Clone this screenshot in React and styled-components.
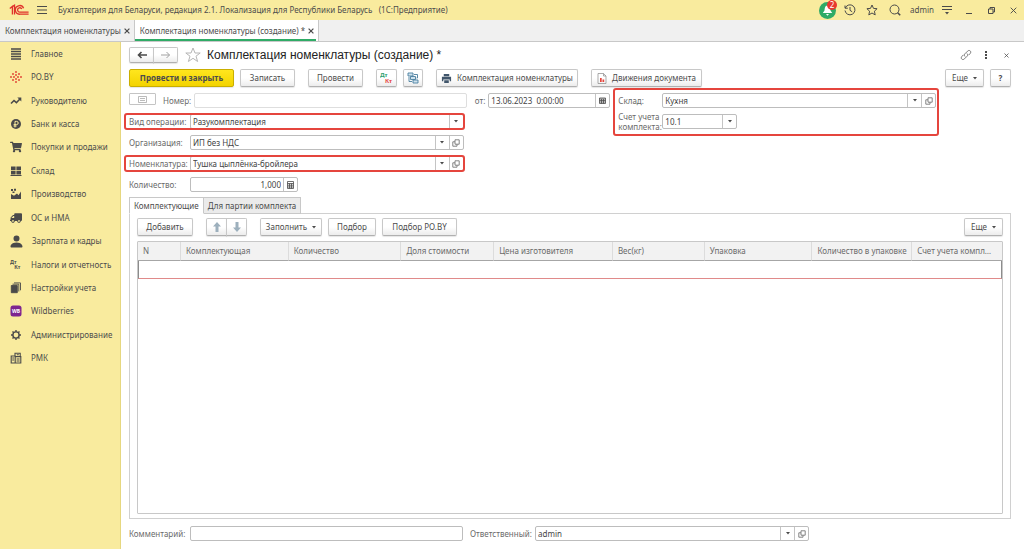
import styled, { createGlobalStyle, css } from "styled-components";
import { FaShoppingCart, FaTruck } from "react-icons/fa";
import { BsPersonFill } from "react-icons/bs";

const GlobalStyle = createGlobalStyle`
    * {
        box-sizing: border-box;
    }

    body {
        margin: 0;
        background: #fff;
    }

    body, button, input, select {
        font-family: "Noto Sans", "Liberation Sans", sans-serif;
        font-size: 8px;
        line-height: 10px;
        color: #4c4c4c;
    }

    svg {
        display: block;
        flex: none;
    }
`

const Page = styled.div`
    display: flex;
    flex-direction: column;
    min-height: 100vh;
`

const TitleBar = styled.header`
    display: flex;
    align-items: center;
    height: 20px;
    padding-left: 9px;
    background: #f9eb9e;

    .title {
        flex: 1;
        margin-left: 3px;
        white-space: pre;
    }
`

const BarButton = styled.button`
    display: flex;
    align-items: center;
    justify-content: center;
    width: ${({ $width }) => $width || 22}px;
    height: 20px;
    padding: 0;
    border: none;
    background: none;
    cursor: pointer;
`

const Bell = styled(BarButton)`
    position: relative;

    span {
        position: absolute;
        top: 0;
        right: 1px;
        width: 10px;
        height: 10px;
        border-radius: 5px;
        background: #e8382f;
        color: #fff;
        text-align: center;
    }
`

const User = styled.span`
    margin: 0 2px 0 4px;
`

const WindowTabs = styled.nav`
    display: flex;
    height: 22px;
    background: #f0f0f0;
    border-bottom: 1px solid #c8c8c8;
`

const WindowTab = styled.div`
    display: flex;
    align-items: center;
    gap: 3px;
    padding: 0 4px 0 5px;
    border-right: 1px solid #c8c8c8;
    ${({ $active }) => $active && css`
        background: linear-gradient(#2fab66, #2fab66) 0 100% / calc(100% - 2px) 2px no-repeat #fff;
    `}

    a {
        color: #4c4c4c;
        text-decoration: none;
        white-space: nowrap;
    }

    button {
        padding: 0;
        border: none;
        background: none;
    }
`

const Body = styled.div`
    display: flex;
    flex: 1;
`

const Sidebar = styled.aside`
    flex: none;
    width: 121px;
    background: #f9eb9e;
    border-right: 1px solid #e6d77f;

    ul {
        display: grid;
        grid-auto-rows: 1fr;
        height: 328px;
        margin: 0;
        padding: 0;
        list-style: none;
    }
`

const MenuItem = styled.li`
    display: flex;
    align-items: center;

    a {
        display: flex;
        align-items: center;
        gap: 9px;
        padding-left: 10px;
        color: #4c4c4c;
        text-decoration: none;
        white-space: nowrap;
    }
`

const MirroredTruck = styled(FaTruck)`
    transform: scaleX(-1);
`

const Main = styled.main`
    display: flex;
    flex-direction: column;
    flex: 1;
    min-width: 0;
    padding: 5px 13px 8px 8px;
`

const Heading = styled.div`
    display: flex;
    align-items: center;
    height: 16px;
    margin: 0 -6px 6px 0;

    h1 {
        flex: 1;
        margin: 0 0 0 6px;
        font-family: "Liberation Sans", Arial, sans-serif;
        font-size: 12px;
        font-weight: 400;
        color: #222;
        white-space: nowrap;
    }

    .star {
        margin-left: 7px;
    }
`

const ButtonPair = styled.div`
    display: flex;

    button:first-child {
        border-radius: 2px 0 0 2px;
    }

    button:last-child {
        margin-left: -1px;
        border-radius: 0 2px 2px 0;
    }
`

const Button = styled.button`
    display: flex;
    align-items: center;
    justify-content: center;
    gap: 5px;
    width: ${({ $width }) => $width}px;
    height: ${({ $height }) => $height || 18}px;
    padding: 0;
    border: 1px solid #c8c8c8;
    border-bottom-color: #b0b0b0;
    border-radius: 2px;
    background: linear-gradient(#fff 50%, #ececec);
    box-shadow: 0 1px 1px rgba(0, 0, 0, 0.1);
    white-space: nowrap;
    cursor: pointer;
    ${({ $primary }) => $primary && css`
        border-color: #c9ae00;
        background: linear-gradient(#ffe61e, #f3d300);
        font-weight: 700;
    `}
`

const CommandBar = styled.div`
    display: flex;
    gap: 6px;

    .gap {
        margin-left: 7px;
    }

    .right {
        margin-left: auto;
    }
`

const Form = styled.div`
    display: grid;
    grid-template-columns: minmax(0, 483fr) minmax(0, 327fr) 69fr;
    gap: 3px;
    margin-top: 6px;
`

const Fields = styled.div`
    display: flex;
    flex-direction: column;
    gap: 6px;
`

const Row = styled.div`
    display: flex;
    align-items: center;
    width: ${({ $wide }) => ($wide ? "100%" : "69.5%")};
    height: 15px;
    ${({ $marked }) => $marked && css`
        position: relative;

        &::after {
            content: "";
            position: absolute;
            inset: -1px -1px -1px -5px;
            border: 2px solid #e5453d;
            border-radius: 3px;
            pointer-events: none;
        }
    `}
`

const Label = styled.label`
    flex: none;
    width: ${({ $width }) => $width}px;
    padding-right: 3px;
    color: #6a6a6a;
    text-align: ${({ $end }) => ($end ? "right" : "left")};
    white-space: nowrap;
`

const NumberMode = styled.button`
    display: flex;
    align-items: center;
    justify-content: center;
    width: 27px;
    height: 12px;
    margin: 0 7px 3px 0;
    padding: 0;
    border: 1px solid #c4c4c4;
    border-radius: 1px;
    background: #fff;
`

const Control = styled.div`
    position: relative;
    display: flex;
    flex: ${({ $width }) => ($width ? "none" : "1")};
    width: ${({ $width }) => ($width ? `${$width}px` : "auto")};
    min-width: 0;
    height: 15px;
    border: 1px solid ${({ $pale }) => ($pale ? "#dedede" : "#bdbdbd")};
    border-radius: 2px;
    background: #fff;

    input, select {
        flex: 1;
        width: 100%;
        min-width: 0;
        padding: 0 2px;
        border: none;
        outline: none;
        appearance: none;
        background: none;
        color: #444;
    }

    .number {
        text-align: right;
    }

    button {
        display: flex;
        align-items: center;
        justify-content: center;
        flex: none;
        width: 14px;
        padding: 0;
        border: none;
        border-left: 1px solid #c4c4c4;
        background: none;
    }
`

const ArrowCell = styled.span`
    position: absolute;
    top: 0;
    right: ${({ $offset }) => $offset}px;
    bottom: 0;
    display: flex;
    align-items: center;
    justify-content: center;
    width: 14px;
    border-left: 1px solid #c4c4c4;
    pointer-events: none;
`

const Accounts = styled.div`
    display: flex;
    flex-direction: column;
    align-self: start;
    gap: 6px;
    margin-top: -5px;
    padding: 3px 1px 5px 3px;
    border: 2px solid #e5453d;
    border-radius: 3px;
`

const AccountRow = styled.div`
    display: flex;
    align-items: center;
    height: 15px;
`

const PageTabs = styled.div`
    display: flex;
    margin-top: 5px;
`

const PageTab = styled.button`
    z-index: ${({ $active }) => ($active ? 1 : 0)};
    height: 17px;
    margin: 0 -1px -1px 0;
    padding: 0 4px;
    border: 1px solid #c8c8c8;
    border-bottom-color: ${({ $active }) => ($active ? "#fff" : "#c8c8c8")};
    background: ${({ $active }) => ($active ? "#fff" : "#ebebeb")};
`

const Panel = styled.section`
    display: flex;
    flex-direction: column;
    flex: 1;
    padding: 4px 7px;
    border: 1px solid #d0d0d0;
`

const TableBox = styled.div`
    flex: 1;
    margin-top: 5px;
    border: 1px solid #c8c8c8;
    border-radius: 1px;
`

const Table = styled.table`
    width: 100%;
    table-layout: fixed;
    border-collapse: separate;
    border-spacing: 0;

    th {
        height: 19px;
        padding: 0 4px 0 5px;
        border-right: 1px solid #dcdcdc;
        border-bottom: 1px solid #a6a6a6;
        background: #f2f2f2;
        color: #6a6a6a;
        font-weight: 400;
        text-align: left;
        white-space: nowrap;
    }

    th:last-child {
        border-right: none;
    }

    td {
        height: 18px;
        padding: 0;
        border: 1px solid #8c8c8c;
        border-top: none;
        border-bottom-color: #e08a8a;
    }
`

const Footer = styled.footer`
    display: grid;
    grid-template-columns: minmax(0, 334fr) minmax(0, 339fr) 195fr;
    gap: 7px;
    margin-top: 7px;

    > div {
        display: flex;
        align-items: center;
    }
`

const ink = "#4a4a4a"

function Icon({ w = 12, h = w, box = "0 0 12 12", children, ...rest }) {
    return (
        <svg width={w} height={h} viewBox={box} fill="none" stroke={ink} aria-hidden="true" {...rest}>
            {children}
        </svg>
    )
}

const Caret = () => (
    <Icon w={4} h={3} box="0 0 4 3"><path d="M0 0h4L2 2.5z" fill={ink} stroke="none" /></Icon>
)

const OpenIcon = () => (
    <Icon w={8} box="0 0 8 8" stroke="#777" strokeWidth="0.9"><path d="M3 .8h4.2v4.4H3zM3 2.8H.8v4.4H5v-2" /></Icon>
)

const Cross = ({ size = 6, weight = 1.2 }) => (
    <Icon w={size} box="0 0 6 6" strokeWidth={weight}><path d="M.6.6l4.8 4.8M5.4.6L.6 5.4" /></Icon>
)

const DtKt = ({ w = 14, first = ink, second = ink }) => (
    <Icon w={w} h={12} box="0 0 14 12" stroke="none" fontWeight="700" fontSize="6">
        <text x="0" y="5" fill={first}>Дт</text>
        <text x="5" y="11" fill={second}>Кт</text>
    </Icon>
)

const sections = [
    ["Главное", <Icon strokeWidth="1.3"><path d="M1 1h10M1 3.5h10M1 6h10M1 8.5h10M1 11h10" /></Icon>],
    ["РО.BY", (
        <Icon stroke="#e03a2f" strokeWidth="1.8" strokeLinecap="round">
            <path d="M6 1v0M3 3v0M9 3v0M6 4v0M1 6v0M4 6v0M8 6v0M11 6v0M6 8v0M3 9v0M9 9v0M6 11v0" />
        </Icon>
    )],
    ["Руководителю", <Icon strokeWidth="1.6"><path d="M1 8.5L4 5.5l2.4 2.2 4-4.2" /><path d="M7.3 2.6h4v4z" fill={ink} stroke="none" /></Icon>],
    ["Банк и касса", (
        <Icon>
            <circle cx="6" cy="6" r="5" fill={ink} stroke="none" />
            <path d="M5 9.4V3.4h1.6a1.6 1.6 0 010 3.2H3.6M3.6 8h3" stroke="#f9eb9e" />
        </Icon>
    )],
    ["Покупки и продажи", <FaShoppingCart size={12} color={ink} />],
    ["Склад", <Icon fill={ink} stroke="none"><path d="M1 1.5h4.6v3.8H1zM6.4 1.5H11v3.8H6.4zM1 6h4.6v3.4H1zM6.4 6H11v3.4H6.4zM.5 10h11v1H.5z" /></Icon>],
    ["Производство", <Icon fill={ink} stroke="none"><path d="M1 11V6l3 1.8L7 5.5l1.5 1.7L11 3.5V11zM1 1h2v2H1zM4 .8h2v2H4zM2.5 3.4h2v1.6h-2z" /></Icon>],
    ["ОС и НМА", <MirroredTruck size={12} color={ink} />],
    ["Зарплата и кадры", <BsPersonFill size={13} color={ink} viewBox="1.500 1.500 13 13" />],
    ["Налоги и отчетность", <DtKt w={12} />],
    ["Настройки учета", (
        <Icon strokeWidth="0.9"><path d="M1.3 3.5h6v7.2h-6z" fill={ink} /><path d="M2.5 2.2h6.3v7.3M4 .9h6.5v7.4" /></Icon>
    )],
    ["Wildberries", (
        <Icon stroke="none">
            <rect x=".5" y=".5" width="11" height="11" rx="2.5" fill="#7d2590" />
            <text x="6" y="8" fill="#fff" fontSize="5" fontWeight="700" textAnchor="middle">WB</text>
        </Icon>
    )],
    ["Администрирование", (
        <Icon strokeWidth="1.4">
            <circle cx="6" cy="6" r="3.1" />
            <path d="M6 1v2M6 9v2M1 6h2M9 6h2M2.5 2.5l1.3 1.3M8.2 8.2l1.3 1.3M9.5 2.5L8.2 3.8M3.8 8.2L2.5 9.5" />
        </Icon>
    )],
    ["РМК", (
        <Icon strokeWidth="1.1">
            <path d="M1.2 4h4v7h-4zM5.2 4.6h5.6V11H5.2M5 4V1.2h5.2v3.4M6.8 2.8h2" />
            <path d="M2.2 6h2M2.2 8h2M6.6 7h3M6.6 9h3" />
        </Icon>
    )],
]

const columns = [
    ["N", 43],
    ["Комплектующая", 108],
    ["Количество", 113],
    ["Доля стоимости", 93],
    ["Цена изготовителя", 119],
    ["Вес(кг)", 92],
    ["Упаковка", 108],
    ["Количество в упаковке", 100],
    ["Счет учета компл…", 90],
]

function SelectField({ id, value, open, width }) {
    return (
        <Control $width={width}>
            <select id={id} defaultValue={value}>
                <option>{value}</option>
            </select>
            <ArrowCell $offset={open ? 14 : 0}><Caret /></ArrowCell>
            {open && <button type="button" aria-label="Открыть"><OpenIcon /></button>}
        </Control>
    )
}

function TopBar() {
    return (
        <TitleBar>
            <Icon w={20} h={12} box="0 0 20 12" stroke="#e0322b" strokeWidth="1.3">
                <path d="M.8 4.4L3.4 2.4v8M5.5 10.4V1.2L3.4 2.6" />
                <path d="M14.6 4.3A4.3 4.3 0 1011 10.2h8.6M12.8 5.1a2.2 2.2 0 10-1.8 3.1h8.6" />
            </Icon>
            <BarButton $width={26} aria-label="Меню">
                <Icon w={10} h={8} box="0 0 10 8"><path d="M0 .5h10M0 4h10M0 7.5h10" /></Icon>
            </BarButton>
            <span className="title">
                {"Бухгалтерия для Беларуси, редакция 2.1. Локализация для Республики Беларусь   (1С:Предприятие)"}
            </span>
            <Bell aria-label="Уведомления">
                <Icon w={17} box="0 0 17 17" stroke="none">
                    <circle cx="8.5" cy="8.5" r="8.5" fill="#2fab66" />
                    <path d="M8.5 3.5c2.6 0 2.7 3 3 5l1.7 2.6H3.8l1.7-2.6c.3-2 .4-5 3-5zM7 12h3l-1.5 1.8z" fill="#fff" />
                </Icon>
                <span>2</span>
            </Bell>
            <BarButton $width={23} aria-label="История">
                <Icon><path d="M1.3 4A5 5 0 111 6.5M1 1.5v2.7h2.8M6 3v3.3l2.2 1.5" /></Icon>
            </BarButton>
            <BarButton aria-label="Избранное">
                <Icon><path d="M6 1l1.5 3.4 3.6.3-2.7 2.5.8 3.7L6 9l-3.2 1.9.8-3.7L.9 4.7l3.6-.3z" /></Icon>
            </BarButton>
            <BarButton $width={23} aria-label="Поиск">
                <Icon><circle cx="5.5" cy="5.5" r="4.5" /><path d="M8.7 8.7l2.5 2.5" strokeWidth="1.6" /></Icon>
            </BarButton>
            <User>admin</User>
            <BarButton aria-label="Настройки">
                <Icon w={10} box="0 0 10 10"><path d="M0 1.5h10M0 4.5h10" /><path d="M3 7h4L5 9.5z" fill={ink} stroke="none" /></Icon>
            </BarButton>
            <BarButton aria-label="Свернуть">
                <Icon w={6} h={8} box="0 0 6 8"><path d="M0 7.5h6" /></Icon>
            </BarButton>
            <BarButton aria-label="Восстановить">
                <Icon w={7} box="0 0 7 7"><path d="M.5 2H5v4.5H.5zM2 2V.5h4.5V5H5" /></Icon>
            </BarButton>
            <BarButton aria-label="Закрыть"><Cross size={7} weight={0.8} /></BarButton>
        </TitleBar>
    )
}

function Commands() {
    return (
        <CommandBar>
            <Button $primary $width={105}>Провести и закрыть</Button>
            <Button $width={55}>Записать</Button>
            <Button className="gap" $width={55}>Провести</Button>
            <Button className="gap" $width={21} aria-label="Дт Кт"><DtKt first="#2fa070" second="#e5453d" /></Button>
            <Button $width={20} aria-label="Структура подчиненности">
                <Icon stroke="#4b7f9f" strokeWidth="0.9">
                    <path d="M1 1h5v3H1zM3.5 4.5h5v3h-5zM6 8h5v3H6z" fill="#cfe2ee" />
                    <path d="M7 2.5h3.5V6h-1M2 5v4.5h3" />
                </Icon>
            </Button>
            <Button className="gap" $width={142}>
                <Icon w={11} stroke="none" fill="#41566b">
                    <path d="M3 1h6v2.5H3zM1 4.2h10V9H9.5V7h-7v2H1zM3.5 8h5v3h-5z" />
                </Icon>
                Комплектация номенклатуры
            </Button>
            <Button className="gap" $width={111}>
                <Icon w={10} h={11} box="0 0 10 11" strokeWidth="0.7" stroke="#888">
                    <path d="M1 .5h5.5L9 3v7.500H1zM6.5.5V3H9" />
                    <path d="M3 5v4h1.7V5zM5.5 6.5h1.7V9H5.5z" fill="#e5453d" stroke="none" />
                </Icon>
                Движения документа
            </Button>
            <Button className="right" $width={39}>Еще <Caret /></Button>
            <Button $width={21}><b>?</b></Button>
        </CommandBar>
    )
}

function DocumentForm() {
    return (
        <Form>
            <Fields>
                <Row $wide>
                    <NumberMode aria-label="Номер вручную">
                        <Icon w={9} h={7} box="0 0 9 7" stroke="#aaa" strokeWidth="0.8"><path d="M.5.5h8v6h-8zM2 2.5h5M2 4.5h5" /></Icon>
                    </NumberMode>
                    <Label htmlFor="number" $width={31}>Номер:</Label>
                    <Control $pale><input id="number" /></Control>
                    <Label htmlFor="date" $width={21} $end>от:</Label>
                    <Control $width={122}>
                        <input id="date" defaultValue="13.06.2023  0:00:00" />
                        <button type="button" aria-label="Календарь">
                            <Icon w={7} box="0 0 7 7" strokeWidth="0.8"><path d="M.5 1h6v5.5h-6zM.5 2h6M.5 3.5h6M.5 5h6M2.5 2v4.5M4.5 2v4.5" /></Icon>
                        </button>
                    </Control>
                </Row>
                <Row $marked>
                    <Label htmlFor="kind" $width={61}>Вид операции:</Label>
                    <SelectField id="kind" value="Разукомплектация" />
                </Row>
                <Row>
                    <Label htmlFor="org" $width={61}>Организация:</Label>
                    <SelectField id="org" value="ИП без НДС" open />
                </Row>
                <Row $marked>
                    <Label htmlFor="item" $width={61}>Номенклатура:</Label>
                    <SelectField id="item" value="Тушка цыплёнка-бройлера" open />
                </Row>
                <Row>
                    <Label htmlFor="qty" $width={61}>Количество:</Label>
                    <Control $width={108}>
                        <input id="qty" className="number" defaultValue="1,000" />
                        <button type="button" aria-label="Калькулятор">
                            <Icon w={7} h={8} box="0 0 7 8" strokeWidth="0.8"><path d="M.5.5h6v7h-6zM.5 2.5h6M.5 4.2h6M.5 6h6M2.5 2.5v5M4.5 2.5v5" /></Icon>
                        </button>
                    </Control>
                </Row>
            </Fields>
            <Accounts>
                <AccountRow>
                    <Label htmlFor="store" $width={44}>Склад:</Label>
                    <SelectField id="store" value="Кухня" open />
                </AccountRow>
                <AccountRow>
                    <Label htmlFor="account" $width={44}>Счет учета<br />комплекта:</Label>
                    <SelectField id="account" value="10.1" width={75} />
                </AccountRow>
            </Accounts>
        </Form>
    )
}

function Components() {
    return (
        <Panel>
            <CommandBar>
                <Button $width={56}>Добавить</Button>
                <ButtonPair className="gap">
                    <Button $width={21} aria-label="Вверх">
                        <Icon w={8} h={10} box="0 0 8 10" fill="#9db0bd" stroke="none"><path d="M4 0l4 4.5H5.5V10h-3V4.5H0z" /></Icon>
                    </Button>
                    <Button $width={21} aria-label="Вниз">
                        <Icon w={8} h={10} box="0 0 8 10" fill="#9db0bd" stroke="none"><path d="M4 10l4-4.5H5.5V0h-3v5.5H0z" /></Icon>
                    </Button>
                </ButtonPair>
                <Button className="gap" $width={62}>Заполнить <Caret /></Button>
                <Button $width={48}>Подбор</Button>
                <Button $width={75}>Подбор РО.BY</Button>
                <Button className="right" $width={39}>Еще <Caret /></Button>
            </CommandBar>
            <TableBox>
                <Table>
                    <colgroup>
                        {columns.map(([name, share]) => <col key={name} width={`${share / 8.66}%`} />)}
                    </colgroup>
                    <thead>
                        <tr>{columns.map(([name]) => <th key={name}>{name}</th>)}</tr>
                    </thead>
                    <tbody>
                        <tr><td colSpan={columns.length} /></tr>
                    </tbody>
                </Table>
            </TableBox>
        </Panel>
    )
}

function App() {
    return (
        <Page>
            <GlobalStyle />
            <TopBar />
            <WindowTabs>
                <WindowTab>
                    <a href="#list">Комплектация номенклатуры</a>
                    <button aria-label="Закрыть"><Cross /></button>
                </WindowTab>
                <WindowTab $active>
                    <a href="#new">Комплектация номенклатуры (создание) *</a>
                    <button aria-label="Закрыть"><Cross /></button>
                </WindowTab>
            </WindowTabs>
            <Body>
                <Sidebar>
                    <ul>
                        {sections.map(([name, icon]) => (
                            <MenuItem key={name}>
                                <a href="#section">{icon}<span>{name}</span></a>
                            </MenuItem>
                        ))}
                    </ul>
                </Sidebar>
                <Main>
                    <Heading>
                        <ButtonPair>
                            <Button $width={25} $height={16} aria-label="Назад">
                                <Icon w={10} h={8} box="0 0 10 8" strokeWidth="1.6"><path d="M10 4H1.5M4.5 1l-3 3 3 3" /></Icon>
                            </Button>
                            <Button $width={25} $height={16} aria-label="Вперед">
                                <Icon w={10} h={8} box="0 0 10 8" stroke="#a0a0a0"><path d="M0 4h8.5M5.5 1l3 3-3 3" /></Icon>
                            </Button>
                        </ButtonPair>
                        <Icon className="star" w={16} box="0 0 16 16" stroke="#b5b5b5">
                            <path d="M8 1l2 5h5.2L11 9.2l1.6 5.3L8 11.300l-4.6 3.2L5 9.2.8 6H6z" />
                        </Icon>
                        <h1>Комплектация номенклатуры (создание) *</h1>
                        <BarButton aria-label="Ссылка">
                            <Icon stroke="#777"><path d="M5 7.5c-1-1-.8-2 0-2.8l2.5-2.5c2-2 4.500.5 2.5 2.5L8.500 6.200M7 4.5c1 1 .8 2 0 2.8L4.5 9.8c-2 2-4.500-.5-2.500-2.500l1.500-1.500" /></Icon>
                        </BarButton>
                        <BarButton $width={18} aria-label="Еще">
                            <Icon w={2} h={8} box="0 0 2 8" fill={ink} stroke="none"><path d="M0 0h2v2H0zM0 3h2v2H0zM0 6h2v2H0z" /></Icon>
                        </BarButton>
                        <BarButton aria-label="Закрыть"><Cross size={5} weight={0.9} /></BarButton>
                    </Heading>
                    <Commands />
                    <DocumentForm />
                    <PageTabs>
                        <PageTab $active>Комплектующие</PageTab>
                        <PageTab>Для партии комплекта</PageTab>
                    </PageTabs>
                    <Components />
                    <Footer>
                        <div>
                            <Label htmlFor="comment" $width={61}>Комментарий:</Label>
                            <Control><input id="comment" /></Control>
                        </div>
                        <div>
                            <Label htmlFor="owner" $width={65}>Ответственный:</Label>
                            <SelectField id="owner" value="admin" open />
                        </div>
                    </Footer>
                </Main>
            </Body>
        </Page>
    )
}

export default App;
